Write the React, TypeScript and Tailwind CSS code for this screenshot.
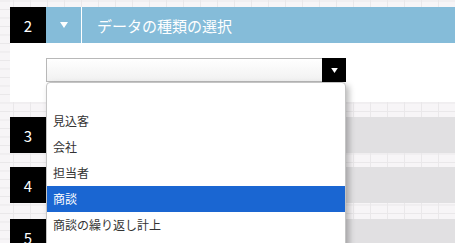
import React from "react";

const font = { fontFamily: '"Noto Sans CJK JP", "Noto Sans", sans-serif' };

function Tri({ className }: { className: string }) {
  return (
    <svg className={className} viewBox="0 0 8 6" width="8" height="6">
      <polygon points="0,0 8,0 4,6" fill="#ffffff" />
    </svg>
  );
}

function NumBox({ n }: { n: string }) {
  return (
    <div className="w-[36px] h-[36px] shrink-0 bg-black text-white flex items-center justify-center text-[15px] leading-none">
      {n}
    </div>
  );
}

function GrayRow({ n, mt }: { n: string; mt: string }) {
  return (
    <div className={`flex h-[36px] ${mt}`}>
      <NumBox n={n} />
      <div className="flex-1 bg-[#e1e0e2]" />
    </div>
  );
}

export default function App() {
  const items = ["見込客", "会社", "担当者", "商談", "商談の繰り返し計上"];
  return (
    <div
      style={font}
      className="w-[455px] h-[243px] overflow-hidden bg-[#f7f5f7] [background-image:linear-gradient(to_right,#eae8ea_1px,transparent_1px),linear-gradient(to_bottom,#eae8ea_1px,transparent_1px)] [background-size:17px_17px,17px_8.5px] [background-position:13px_0,0_0.5px] pl-[10px] pt-[7px]"
    >
      <div className="flex h-[36px]">
        <NumBox n="2" />
        <div className="flex-1 flex bg-[#85bcd9]">
          <div className="w-[35px] flex items-center justify-center">
            <Tri className="block" />
          </div>
          <div className="w-px bg-white" />
          <div className="pl-[15px] flex items-center text-white text-[15px] leading-none">
            データの種類の選択
          </div>
        </div>
      </div>
      <div className="bg-white h-[59px] pl-[36px] pt-[15px] relative z-10">
        <div className="relative w-[300px]">
          <div className="h-[24px] border border-[#b8b8b8] bg-gradient-to-b from-white to-[#f1f1f1] flex justify-end">
            <div className="w-[24px] -my-px -mr-px bg-black flex items-center justify-center">
              <Tri className="block w-[7px] h-[5px]" />
            </div>
          </div>
          <div className="absolute left-0 top-full w-[300px] bg-white border border-[#c4c4c4] rounded-t-[4px] shadow-[3px_3px_6px_rgba(0,0,0,0.28)] text-[12px] text-[#333] pb-[30px]">
            <div className="h-[25px]" />
            {items.map((t, i) => (
              <div
                key={t}
                className={`h-[26px] flex items-center pl-[6px] ${
                  i === 3 ? "bg-[#1a66d2] text-white" : ""
                }`}
              >
                {t}
              </div>
            ))}
          </div>
        </div>
      </div>
      <GrayRow n="3" mt="mt-[15px]" />
      <GrayRow n="4" mt="mt-[14px]" />
      <GrayRow n="5" mt="mt-[16px]" />
    </div>
  );
}
